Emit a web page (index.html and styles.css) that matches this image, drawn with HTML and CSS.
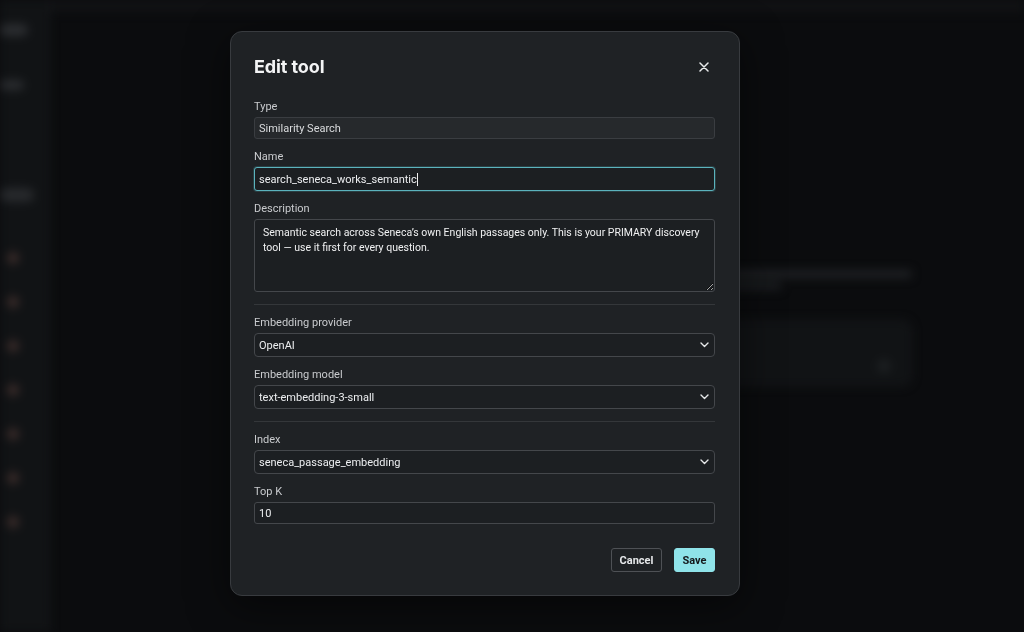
FILE: index.html
```html
<!DOCTYPE html>
<html lang="en">
<head>
<meta charset="utf-8">
<title>Edit tool</title>
<link rel="stylesheet" href="styles.css">
</head>
<body>
<div class="app">
  <aside class="sidebar">
    <div class="sb-top"></div>
    <div class="sb-item"></div>
    <div class="sb-pill"></div>
    <div class="sb-dots">
      <span class="dot"></span><span class="dot"></span><span class="dot"></span>
      <span class="dot"></span><span class="dot"></span><span class="dot"></span><span class="dot"></span>
    </div>
  </aside>
  <main class="main">
    <div class="topbar"></div>
    <div class="content">
      <div class="ghost-text"><span class="gl1"></span><span class="gl2"></span></div>
      <div class="ghost-box"><span class="ghost-btn"></span></div>
    </div>
  </main>
</div>

<div class="overlay">
  <div class="modal" role="dialog" aria-label="Edit tool">
    <div class="modal-head">
      <h2 class="title">Edit tool</h2>
      <button class="close" aria-label="Close">
        <svg width="10" height="10" viewBox="0 0 10 10"><path d="M1 1L9 9M9 1L1 9" stroke="#e9ebec" stroke-width="1.5" stroke-linecap="round"/></svg>
      </button>
    </div>
    <div class="form">
      <div class="field">
        <label class="label">Type</label>
        <div class="input disabled">Similarity Search</div>
      </div>
      <div class="field">
        <label class="label">Name</label>
        <div class="input focused">search_seneca_works_semantic<span class="caret"></span></div>
      </div>
      <div class="field">
        <label class="label">Description</label>
        <textarea class="textarea">Semantic search across Seneca’s own English passages only. This is your PRIMARY discovery tool — use it first for every question.</textarea>
      </div>
      <hr class="divider">
      <div class="field">
        <label class="label">Embedding provider</label>
        <div class="select"><span>OpenAI</span><svg class="chev" width="9" height="6" viewBox="0 0 9 6"><path d="M1 1L4.5 4.5L8 1" fill="none" stroke="#e6e8ea" stroke-width="1.4" stroke-linecap="round" stroke-linejoin="round"/></svg></div>
      </div>
      <div class="field">
        <label class="label">Embedding model</label>
        <div class="select"><span>text-embedding-3-small</span><svg class="chev" width="9" height="6" viewBox="0 0 9 6"><path d="M1 1L4.5 4.5L8 1" fill="none" stroke="#e6e8ea" stroke-width="1.4" stroke-linecap="round" stroke-linejoin="round"/></svg></div>
      </div>
      <hr class="divider">
      <div class="field">
        <label class="label">Index</label>
        <div class="select"><span>seneca_passage_embedding</span><svg class="chev" width="9" height="6" viewBox="0 0 9 6"><path d="M1 1L4.5 4.5L8 1" fill="none" stroke="#e6e8ea" stroke-width="1.4" stroke-linecap="round" stroke-linejoin="round"/></svg></div>
      </div>
      <div class="field">
        <label class="label">Top K</label>
        <div class="input">10</div>
      </div>
    </div>
    <div class="actions">
      <button class="btn btn-cancel">Cancel</button>
      <button class="btn btn-save">Save</button>
    </div>
  </div>
</div>
</body>
</html>
```

FILE: styles.css
```css
* { box-sizing: border-box; }
html, body { margin: 0; padding: 0; }
body {
  width: 1024px;
  height: 632px;
  overflow: hidden;
  background: #0b0c0e;
  font-family: Roboto, "Noto Sans", "Liberation Sans", sans-serif;
  color: #e8eaec;
}

/* blurred background app */
.app {
  display: flex;
  height: 632px;
  filter: blur(5px);
}
.sidebar {
  width: 50px;
  flex: none;
  background: #111315;
  border-right: 2px solid #16181b;
  display: flex;
  flex-direction: column;
  align-items: flex-start;
  padding-top: 24px;
}
.sb-top { width: 28px; height: 12px; border-radius: 6px; background: #2b2d30; }
.sb-item { width: 24px; height: 10px; border-radius: 5px; background: #2a2c2f; margin-top: 44px; }
.sb-pill { width: 34px; height: 14px; border-radius: 7px; background: #27292c; margin-top: 98px; }
.sb-dots {
  display: flex;
  flex-direction: column;
  gap: 32px;
  margin-top: 50px;
  padding-left: 7px;
}
.dot { width: 12px; height: 12px; border-radius: 50%; background: #3b2c2a; }
.main { flex: 1; display: flex; flex-direction: column; }
.topbar { height: 12px; background: #111214; }
.content {
  flex: 1;
  display: flex;
  flex-direction: column;
  align-items: flex-end;
  padding: 258px 112px 0 0;
}
.ghost-text { width: 300px; display: flex; flex-direction: column; gap: 4px; }
.gl1 { height: 8px; width: 300px; background: #1f2124; border-radius: 4px; }
.gl2 { height: 8px; width: 170px; background: #1b1d20; border-radius: 4px; }
.ghost-box {
  margin-top: 30px;
  width: 300px;
  height: 66px;
  border-radius: 10px;
  background: #111315;
  border: 1px solid #1a1c1f;
  display: flex;
  align-items: flex-end;
  justify-content: flex-end;
  padding: 0 20px 12px 0;
}
.ghost-btn { width: 14px; height: 14px; border-radius: 50%; background: #1c1f21; }

/* modal */
.overlay {
  position: fixed;
  inset: 0;
}
.modal {
  position: absolute;
  left: 230px;
  top: 31px;
  width: 510px;
  background: #1f2225;
  border: 1px solid #383b3f;
  border-radius: 12px;
  padding: 23px 24px 23px 23px;
  box-shadow: 0 10px 40px rgba(0,0,0,0.5);
}
.modal-head {
  display: flex;
  align-items: center;
  justify-content: space-between;
  height: 24px;
}
.title {
  margin: 0;
  font-family: Inter, "Noto Sans", sans-serif;
  font-size: 18px;
  line-height: 24px;
  font-weight: 700;
  color: #f3f4f5;
  letter-spacing: -0.1px;
}
.close {
  background: none;
  border: 0;
  padding: 0;
  width: 20px;
  height: 20px;
  display: flex;
  align-items: center;
  justify-content: center;
  margin-right: 1px;
}
.form {
  margin-top: 20px;
  display: flex;
  flex-direction: column;
  gap: 10px;
}
.field { display: flex; flex-direction: column; gap: 2px; }
.label {
  font-size: 11px;
  line-height: 16px;
  color: #c9cbce;
}
.input, .select, .textarea {
  font-family: inherit;
  font-size: 11px;
  color: #eceef0;
  background: #1c1f22;
  border: 1px solid #44474b;
  border-radius: 3px;
}
.input {
  height: 22px;
  padding: 0 4px;
  display: flex;
  align-items: center;
}
.input.disabled { background: #26292c; border-color: #3a3d41; color: #d9dbdd; }
.input.focused { height: 24px; border-color: #5bb3bd; box-shadow: 0 0 0 1px rgba(91,179,189,0.2); }
.caret { display: inline-block; width: 1px; height: 13px; background: #f0f0f0; }
.textarea {
  display: block;
  width: 100%;
  height: 73px;
  padding: 5px 8px;
  font-size: 10.5px;
  line-height: 15px;
  color: #f0f1f2;
  resize: vertical;
  outline: none;
}
.select {
  height: 24px;
  padding: 0 5px 0 4px;
  display: flex;
  align-items: center;
  justify-content: space-between;
  border-radius: 4px;
}
.chev { flex: none; }
.divider {
  margin: 2px 0 0;
  border: 0;
  height: 1px;
  background: #34373a;
}
.actions {
  margin-top: 24px;
  display: flex;
  justify-content: flex-end;
  gap: 12px;
}
.btn {
  font-family: inherit;
  font-size: 11px;
  font-weight: 700;
  height: 24px;
  border-radius: 3px;
  padding: 0;
  cursor: pointer;
}
.btn-cancel {
  background: transparent;
  border: 1px solid #4e5155;
  color: #e6e8ea;
  width: 51px;
}
.btn-save {
  background: #8fe3e9;
  border: 1px solid #8fe3e9;
  color: #15181b;
  width: 41px;
}
```
